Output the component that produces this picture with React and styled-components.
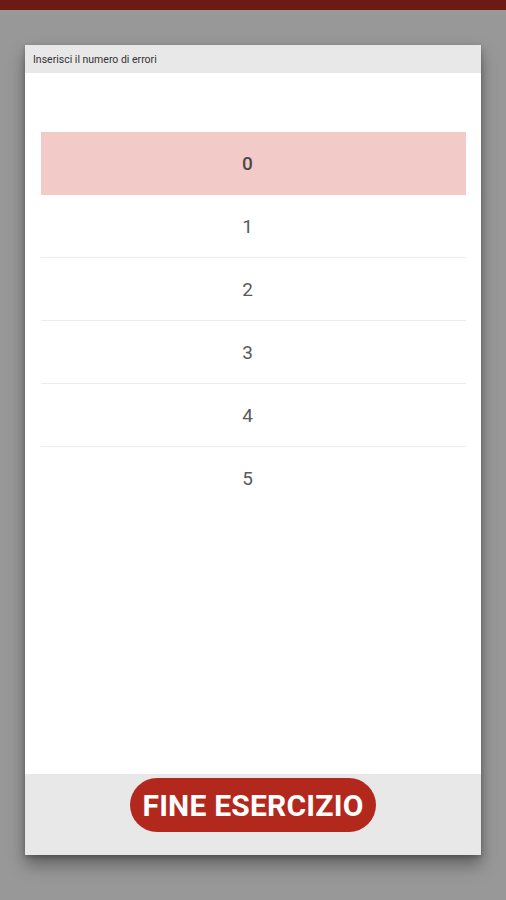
import React, { useState } from "react";
import styled, { createGlobalStyle } from "styled-components";

const GlobalStyle = createGlobalStyle`
  html, body {
    margin: 0;
    padding: 0;
    background: #989898;
    font-family: Roboto, "Noto Sans", sans-serif;
  }
`;

const Screen = styled.div`
  width: 506px;
  height: 900px;
  background: #989898;
  display: flex;
  flex-direction: column;
  overflow: hidden;
`;

const StatusBar = styled.div`
  height: 10px;
  background: #6b1b13;
  flex-shrink: 0;
`;

const Dialog = styled.section`
  margin: 35px 25px 0 25px;
  height: 810px;
  background: #fff;
  display: flex;
  flex-direction: column;
  box-shadow: 0 10px 16px rgba(0, 0, 0, 0.35), 0 2px 5px rgba(0, 0, 0, 0.25);
`;

const Header = styled.div`
  height: 28px;
  background: #e8e8e8;
  display: flex;
  align-items: center;
  padding: 0 8px;
  font-size: 10.5px;
  color: #333;
`;

const Body = styled.div`
  flex: 1;
  padding: 59px 15px 0 16px;
`;

const Choice = styled.div`
  height: 62px;
  display: flex;
  align-items: center;
  justify-content: center;
  padding-right: 12px;
  font-size: 19px;
  color: ${p => (p.selected ? "#4a4a4a" : "#5a5a5a")};
  font-weight: ${p => (p.selected ? 500 : 400)};
  background: ${p => (p.selected ? "#f2cbc9" : "transparent")};
  border-bottom: 1px solid ${p => (p.last || p.selected ? "transparent" : "#ececec")};
  cursor: pointer;
`;

const Footer = styled.div`
  height: 81px;
  background: #e8e8e8;
  display: flex;
  justify-content: center;
  padding-top: 4px;
  box-sizing: border-box;
`;

const FinishButton = styled.button`
  width: 246px;
  height: 54px;
  padding: 0;
  border: none;
  border-radius: 27px;
  background: #b3281d;
  color: #fff;
  font-family: Roboto, "Noto Sans", sans-serif;
  font-weight: 700;
  font-size: 30px;
  letter-spacing: 0.2px;
  cursor: pointer;
`;

export default function App() {
  const [errors, setErrors] = useState(0);
  const options = [0, 1, 2, 3, 4, 5];

  return (
    <Screen>
      <GlobalStyle />
      <StatusBar />
      <Dialog>
        <Header>Inserisci il numero di errori</Header>
        <Body>
          {options.map((n, i) => (
            <Choice
              key={n}
              selected={errors === n}
              last={i === options.length - 1}
              onClick={() => setErrors(n)}
            >
              {n}
            </Choice>
          ))}
        </Body>
        <Footer>
          <FinishButton>FINE ESERCIZIO</FinishButton>
        </Footer>
      </Dialog>
    </Screen>
  );
}
